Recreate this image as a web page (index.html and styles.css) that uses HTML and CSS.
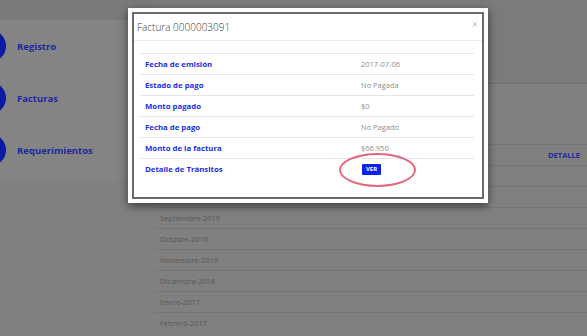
FILE: index.html
```html
<!DOCTYPE html>
<html lang="es">
<head>
    <meta charset="UTF-8">
    <meta name="viewport" content="width=device-width, initial-scale=1.0">
    <title>Facturas</title>
    <link rel="stylesheet" href="styles.css">
</head>
<body>
    <div class="page">
        <aside class="sidebar">
            <div class="sidebar-top"></div>
            <nav class="sidebar-panel">
                <a class="nav-item" href="#"><span class="nav-dot"></span>Registro</a>
                <a class="nav-item" href="#"><span class="nav-dot"></span>Facturas</a>
                <a class="nav-item" href="#"><span class="nav-dot"></span>Requerimientos</a>
            </nav>
        </aside>

        <main class="main">
            <div class="main-head"></div>
            <div class="list">
                <div class="list-row list-header">
                    <span></span>
                    <span class="detail-link">DETALLE</span>
                </div>
                <div class="list-row"></div>
                <div class="list-row"></div>
                <div class="list-row">Septiembre-2016</div>
                <div class="list-row">Octubre-2016</div>
                <div class="list-row">Noviembre-2016</div>
                <div class="list-row">Diciembre-2016</div>
                <div class="list-row">Enero-2017</div>
                <div class="list-row">Febrero-2017</div>
            </div>
        </main>
    </div>

    <!-- modal abierto sobre la lista -->
    <div class="modal">
        <div class="modal-inner">
            <div class="modal-header">
                <h4 class="modal-title">Factura 0000003091</h4>
                <span class="close">&times;</span>
            </div>
            <div class="modal-body">
                <table class="invoice">
                    <tr>
                        <td class="label">Fecha de emisión</td>
                        <td class="value">2017-07-06</td>
                    </tr>
                    <tr>
                        <td class="label">Estado de pago</td>
                        <td class="value">No Pagada</td>
                    </tr>
                    <tr>
                        <td class="label">Monto pagado</td>
                        <td class="value">$0</td>
                    </tr>
                    <tr>
                        <td class="label">Fecha de pago</td>
                        <td class="value">No Pagado</td>
                    </tr>
                    <tr>
                        <td class="label">Monto de la factura</td>
                        <td class="value">$66.950</td>
                    </tr>
                    <tr>
                        <td class="label">Detalle de Tránsitos</td>
                        <td class="value">
                            <span class="btn-wrap">
                                <button class="btn-ver">VER</button>
                                <span class="highlight"></span>
                            </span>
                        </td>
                    </tr>
                </table>
            </div>
        </div>
    </div>
</body>
</html>
```

FILE: styles.css
```css
/* Global Reset */
* {
    margin: 0;
    padding: 0;
    box-sizing: border-box;
}

body {
    font-family: 'Open Sans', 'Liberation Sans', sans-serif;
    background: #808080;
    width: 587px;
    height: 336px;
    overflow: hidden;
    position: relative;
}

.page {
    display: grid;
    grid-template-columns: 150px 1fr;
    height: 100%;
}

/* Sidebar */
.sidebar-top {
    height: 20px;
    background: #7a7a7a;
}

.sidebar-panel {
    height: 160px;
    background: #848484;
    display: flex;
    flex-direction: column;
}

.nav-item {
    display: flex;
    align-items: center;
    height: 52px;
    flex-shrink: 0;
    color: #1d289e;
    font-size: 9.5px;
    font-weight: 700;
    text-decoration: none;
    margin-left: -26px;
}

.nav-dot {
    width: 32px;
    height: 32px;
    border-radius: 50%;
    background: #0b19a3;
    margin-right: 11px;
    flex-shrink: 0;
}

/* Main list behind the modal */
.main-head {
    height: 84px;
    background: #7b7b7b;
    border-bottom: 1px solid #727272;
}

.list {
    margin-top: 60px;
    padding-left: 5px;
}

.list-row {
    height: 21px;
    border-top: 1px solid #767676;
    display: flex;
    align-items: center;
    justify-content: space-between;
    padding: 0 7px 0 5px;
    font-size: 7.5px;
    color: #585858;
}

.detail-link {
    color: #1c2b9c;
    font-weight: 700;
    font-size: 7.5px;
}

/* Modal */
.modal {
    position: absolute;
    left: 128px;
    top: 8px;
    width: 360px;
    height: 195px;
    background: #fff;
    padding: 4px;
    box-shadow: 0 3px 9px rgba(0, 0, 0, 0.55);
}

.modal-inner {
    height: 100%;
    border: 2px solid #6a6a6a;
}

.modal-header {
    position: relative;
    height: 27px;
    border-bottom: 1px solid #ececec;
    display: flex;
    align-items: center;
    padding-left: 3px;
}

.modal-title {
    font-size: 10px;
    font-weight: 300;
    color: #3a3a3a;
}

.close {
    position: absolute;
    right: 4px;
    top: 2px;
    font-size: 11px;
    color: #c4c4c4;
}

.modal-body {
    padding: 12px 6px 0 6px;
}

.invoice {
    width: 334px;
    border-collapse: collapse;
    table-layout: fixed;
}

.invoice td {
    height: 21px;
    border-top: 1px solid #e6e6e6;
    padding: 0 5px;
    vertical-align: middle;
}

.invoice .label {
    width: 214px;
    color: #1a30e6;
    font-weight: 700;
    font-size: 7.8px;
}

.invoice .value {
    color: #8e8e8e;
    font-size: 7.5px;
    padding-left: 7px;
}

.btn-wrap {
    position: relative;
    display: inline-block;
    padding-left: 1px;
}

.btn-ver {
    display: block;
    width: 19px;
    height: 11px;
    border: none;
    border-radius: 1px;
    background: #0a22ee;
    color: #fff;
    font-family: 'Open Sans', sans-serif;
    font-size: 6px;
    font-weight: 700;
    line-height: 11px;
}

.highlight {
    position: absolute;
    left: -22px;
    top: -11px;
    width: 77px;
    height: 34px;
    border: 2px solid #e5677f;
    border-radius: 50%;
}
```
